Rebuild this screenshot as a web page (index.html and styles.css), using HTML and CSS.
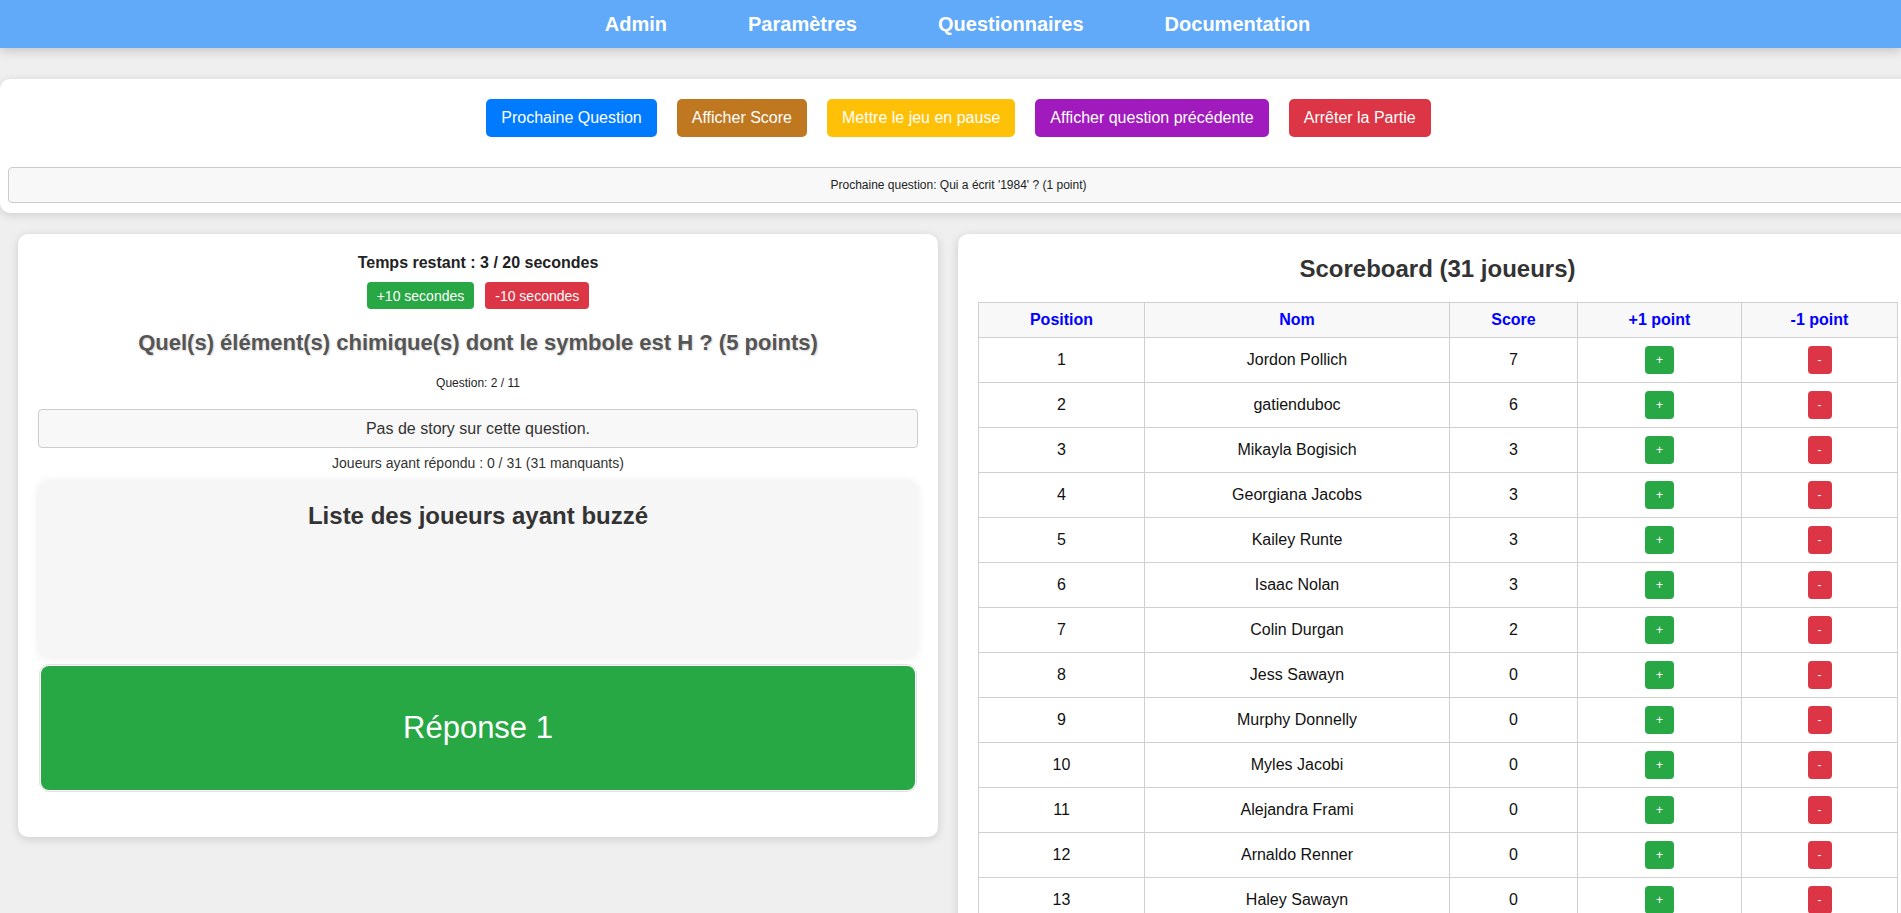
FILE: index.html
```html
<!DOCTYPE html>
<html lang="fr">
<head>
<meta charset="utf-8">
<title>Admin - Partie</title>
<link rel="stylesheet" href="styles.css">
</head>
<body>
<nav class="navbar">
  <a class="nav-link" href="#">Admin</a>
  <a class="nav-link" href="#">Paramètres</a>
  <a class="nav-link" href="#">Questionnaires</a>
  <a class="nav-link" href="#">Documentation</a>
</nav>

<section class="controls">
  <div class="control-buttons">
    <button class="btn btn-blue">Prochaine Question</button>
    <button class="btn btn-brown">Afficher Score</button>
    <button class="btn btn-yellow">Mettre le jeu en pause</button>
    <button class="btn btn-purple">Afficher question précédente</button>
    <button class="btn btn-red">Arrêter la Partie</button>
  </div>
  <div class="next-question">Prochaine question: Qui a écrit '1984' ? (1 point)</div>
</section>

<main class="main-row">
  <section class="card game-card">
    <div class="timer">Temps restant : 3 / 20 secondes</div>
    <div class="timer-buttons">
      <button class="small-btn green">+10 secondes</button>
      <button class="small-btn red">-10 secondes</button>
    </div>
    <h2 class="question">Quel(s) élément(s) chimique(s) dont le symbole est H ? (5 points)</h2>
    <div class="question-count">Question: 2 / 11</div>
    <div class="story">Pas de story sur cette question.</div>
    <div class="answered">Joueurs ayant répondu : 0 / 31 (31 manquants)</div>
    <div class="buzz-list">
      <h2 class="buzz-title">Liste des joueurs ayant buzzé</h2>
    </div>
    <div class="answer-wrap">
      <div class="answer">Réponse 1</div>
    </div>
  </section>

  <section class="card score-card">
    <h2 class="score-title">Scoreboard (31 joueurs)</h2>
    <table class="score-table">
      <colgroup>
        <col class="c-pos"><col class="c-name"><col class="c-score"><col class="c-plus"><col class="c-minus">
      </colgroup>
      <thead>
        <tr><th>Position</th><th>Nom</th><th>Score</th><th>+1 point</th><th>-1 point</th></tr>
      </thead>
      <tbody>
        <tr><td>1</td><td>Jordon Pollich</td><td>7</td><td><button class="pt plus">+</button></td><td><button class="pt minus">-</button></td></tr>
        <tr><td>2</td><td>gatienduboc</td><td>6</td><td><button class="pt plus">+</button></td><td><button class="pt minus">-</button></td></tr>
        <tr><td>3</td><td>Mikayla Bogisich</td><td>3</td><td><button class="pt plus">+</button></td><td><button class="pt minus">-</button></td></tr>
        <tr><td>4</td><td>Georgiana Jacobs</td><td>3</td><td><button class="pt plus">+</button></td><td><button class="pt minus">-</button></td></tr>
        <tr><td>5</td><td>Kailey Runte</td><td>3</td><td><button class="pt plus">+</button></td><td><button class="pt minus">-</button></td></tr>
        <tr><td>6</td><td>Isaac Nolan</td><td>3</td><td><button class="pt plus">+</button></td><td><button class="pt minus">-</button></td></tr>
        <tr><td>7</td><td>Colin Durgan</td><td>2</td><td><button class="pt plus">+</button></td><td><button class="pt minus">-</button></td></tr>
        <tr><td>8</td><td>Jess Sawayn</td><td>0</td><td><button class="pt plus">+</button></td><td><button class="pt minus">-</button></td></tr>
        <tr><td>9</td><td>Murphy Donnelly</td><td>0</td><td><button class="pt plus">+</button></td><td><button class="pt minus">-</button></td></tr>
        <tr><td>10</td><td>Myles Jacobi</td><td>0</td><td><button class="pt plus">+</button></td><td><button class="pt minus">-</button></td></tr>
        <tr><td>11</td><td>Alejandra Frami</td><td>0</td><td><button class="pt plus">+</button></td><td><button class="pt minus">-</button></td></tr>
        <tr><td>12</td><td>Arnaldo Renner</td><td>0</td><td><button class="pt plus">+</button></td><td><button class="pt minus">-</button></td></tr>
        <tr><td>13</td><td>Haley Sawayn</td><td>0</td><td><button class="pt plus">+</button></td><td><button class="pt minus">-</button></td></tr>
      </tbody>
    </table>
  </section>
</main>
</body>
</html>
```

FILE: styles.css
```css
* { box-sizing: border-box; }

html, body {
  margin: 0;
  padding: 0;
}

body {
  background: #efefef;
  font-family: "Liberation Sans", Arial, sans-serif;
  color: #222;
  overflow: hidden;
}

/* ---------- navbar ---------- */
.navbar {
  height: 48px;
  background: #61aaf9;
  display: flex;
  justify-content: center;
  align-items: center;
  gap: 81px;
  padding-left: 14px;
  box-shadow: 0 3px 10px rgba(0, 0, 0, 0.18);
  position: relative;
  z-index: 2;
}

.nav-link {
  color: #fff;
  font-weight: bold;
  font-size: 20px;
  text-decoration: none;
}

/* ---------- controls ---------- */
.controls {
  box-sizing: content-box;
  width: 100%;
  margin-top: 31px;
  padding: 20px 8px 10px;
  background: #fff;
  border-radius: 10px;
  box-shadow: 0 2px 10px rgba(0, 0, 0, 0.14);
}

.control-buttons {
  display: flex;
  justify-content: center;
  gap: 20px;
}

.btn {
  height: 38px;
  padding: 0 15px;
  border: none;
  border-radius: 5px;
  color: #fff;
  font-family: "Liberation Sans", Arial, sans-serif;
  font-size: 16px;
}

.btn-blue { background: #007bff; }
.btn-brown { background: #bf781f; }
.btn-yellow { background: #ffc107; }
.btn-purple { background: #a11abd; }
.btn-red { background: #dc3545; }

.next-question {
  margin-top: 30px;
  height: 36px;
  border: 1px solid #ccc;
  border-radius: 4px;
  background: #f8f8f8;
  display: flex;
  align-items: center;
  justify-content: center;
  font-size: 12px;
  color: #222;
}

/* ---------- main row ---------- */
.main-row {
  display: flex;
  align-items: flex-start;
  gap: 20px;
  margin-top: 21px;
  padding-left: 18px;
}

.card {
  flex: none;
  background: #fff;
  border-radius: 10px;
  padding: 20px;
  box-shadow: 0 2px 10px rgba(0, 0, 0, 0.15);
}

.game-card {
  width: 920px;
  text-align: center;
  padding-bottom: 45px;
}

.timer {
  font-weight: bold;
  font-size: 16px;
  line-height: 18px;
  color: #222;
}

.timer-buttons {
  display: flex;
  justify-content: center;
  gap: 11px;
  margin-top: 10px;
}

.small-btn {
  height: 27px;
  padding: 0 10px;
  border: none;
  border-radius: 4px;
  color: #fff;
  font-family: "Liberation Sans", Arial, sans-serif;
  font-size: 14px;
}

.small-btn.green { background: #28a745; }
.small-btn.red { background: #dc3545; }

.question {
  margin: 21px 0 0;
  font-size: 22px;
  line-height: 25px;
  font-weight: bold;
  color: #555;
  text-shadow: 1px 1px 2px rgba(0, 0, 0, 0.18);
}

.question-count {
  margin-top: 21px;
  font-size: 12px;
  line-height: 14px;
  color: #222;
}

.story {
  margin-top: 19px;
  height: 39px;
  border: 1px solid #ccc;
  border-radius: 4px;
  background: #f8f8f8;
  display: flex;
  align-items: center;
  justify-content: center;
  font-size: 16px;
  color: #333;
}

.answered {
  margin-top: 7px;
  font-size: 14px;
  line-height: 16px;
  color: #333;
}

.buzz-list {
  margin-top: 10px;
  height: 177px;
  background: #f6f6f6;
  border-radius: 10px;
  padding-top: 21px;
  box-shadow: 0 0 8px rgba(0, 0, 0, 0.08);
}

.buzz-title {
  margin: 0;
  font-size: 24px;
  line-height: 28px;
  font-weight: bold;
  color: #333;
}

.answer-wrap {
  margin: 6px 1px 0;
  padding: 1px;
  border: 1px solid #e2e2e2;
  border-radius: 10px;
  background: #fff;
}

.answer {
  height: 124px;
  background: #28a745;
  border-radius: 8px;
  color: #fff;
  font-size: 31px;
  display: flex;
  align-items: center;
  justify-content: center;
}

/* ---------- scoreboard ---------- */
.score-card {
  width: 959px;
  text-align: center;
}

.score-title {
  margin: 1px 0 19px;
  font-size: 24px;
  line-height: 28px;
  font-weight: bold;
  color: #333;
}

.score-table {
  width: 100%;
  border-collapse: collapse;
  table-layout: fixed;
  font-size: 16px;
}

.c-pos { width: 166px; }
.c-name { width: 305px; }
.c-score { width: 128px; }
.c-plus { width: 164px; }
.c-minus { width: 156px; }

.score-table th,
.score-table td {
  border: 1px solid #d0d0d0;
  text-align: center;
  padding: 0;
}

.score-table th {
  height: 35px;
  background: #f8f8f8;
  color: #0000ff;
  font-weight: bold;
}

.score-table td {
  height: 45px;
  color: #111;
}

.pt {
  height: 28px;
  padding: 0 11px;
  border: none;
  border-radius: 4px;
  color: #fff;
  font-family: "Liberation Sans", Arial, sans-serif;
  font-size: 12px;
  vertical-align: middle;
}

.pt.plus { background: #28a745; }
.pt.minus { background: #dc3545; padding: 0 10px; }
```
